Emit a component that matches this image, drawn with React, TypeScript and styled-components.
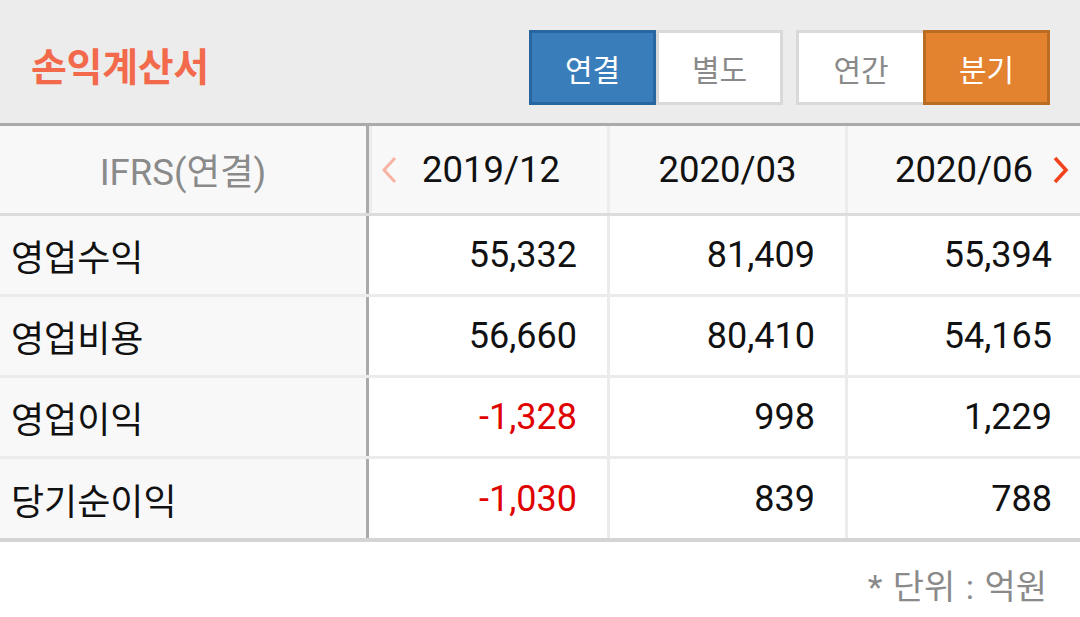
import React from "react";
import styled, { createGlobalStyle } from "styled-components";

const GlobalStyle = createGlobalStyle`
  html, body {
    margin: 0;
    padding: 0;
    background: #ffffff;
  }
  body {
    font-family: Roboto, "Noto Sans CJK KR", sans-serif;
    -webkit-font-smoothing: antialiased;
  }
  * { box-sizing: border-box; }
`;

const Page = styled.div`
  width: 1080px;
  height: 617px;
  display: flex;
  flex-direction: column;
  background: #ffffff;
  overflow: hidden;
`;

const TopBar = styled.header`
  height: 126px;
  flex: none;
  background: #ececec;
  border-bottom: 3px solid #aaaaaa;
  display: flex;
  align-items: flex-start;
  padding: 30px 30px 0 31px;
`;

const Title = styled.h1`
  margin: 0;
  height: 75px;
  padding-bottom: 8px;
  display: flex;
  align-items: center;
  font-family: "Noto Sans CJK KR", sans-serif;
  font-weight: 700;
  font-size: 39px;
  letter-spacing: -0.3px;
  color: #f26a4b;
  flex: 1;
`;

const Toggles = styled.div`
  display: flex;
  gap: 13px;
`;

const Group = styled.div`
  display: flex;
`;

const ToggleButton = styled.button<{ $tone: "blue" | "orange" | "off" }>`
  width: 127px;
  height: 75px;
  margin: 0;
  padding: 0;
  display: flex;
  align-items: center;
  justify-content: center;
  font-family: "Noto Sans CJK KR", sans-serif;
  font-size: 30px;
  font-weight: 400;
  border: 3px solid
    ${(p) =>
      p.$tone === "blue" ? "#2866a1" : p.$tone === "orange" ? "#b96d23" : "#d9d9d9"};
  background: ${(p) =>
    p.$tone === "blue" ? "#3a7dbb" : p.$tone === "orange" ? "#e3822f" : "#ffffff"};
  color: ${(p) => (p.$tone === "off" ? "#8a8a8a" : "#ffffff")};
  & + & {
    border-left-width: ${(p) => (p.$tone === "off" ? "0" : "3px")};
  }
`;

const Table = styled.div`
  flex: none;
  display: flex;
  flex-direction: column;
  border-bottom: 4px solid #d4d4d4;
`;

const Row = styled.div<{ $head?: boolean }>`
  display: grid;
  grid-template-columns: 369px 238px 238px 1fr;
  height: ${(p) => (p.$head ? "90px" : "81px")};
  border-bottom: 3px solid ${(p) => (p.$head ? "#dcdcdc" : "#ebebeb")};
  background: ${(p) => (p.$head ? "#f8f8f8" : "#ffffff")};
  &:last-child {
    border-bottom: none;
    height: 79px;
  }
`;

const LabelCell = styled.div<{ $head?: boolean }>`
  background: #f8f8f8;
  border-right: 3px solid #aaaaaa;
  display: flex;
  align-items: center;
  justify-content: ${(p) => (p.$head ? "center" : "flex-start")};
  padding-left: ${(p) => (p.$head ? "0" : "11px")};
  font-size: ${(p) => (p.$head ? "36.5px" : "36px")};
  color: ${(p) => (p.$head ? "#8a8a8a" : "#111111")};
`;

const PeriodCell = styled.div<{ $divider?: boolean }>`
  position: relative;
  display: flex;
  align-items: center;
  justify-content: center;
  border-left: 3px solid #ececec;
  font-size: 36.5px;
  color: #111111;
  padding-left: ${(p) => (p.$divider ? "0" : "3px")};
`;

const ValueCell = styled.div<{ $divider?: boolean; $negative?: boolean }>`
  display: flex;
  align-items: center;
  justify-content: flex-end;
  padding-right: 30px;
  border-left: ${(p) => (p.$divider ? "3px solid #ebebeb" : "none")};
  font-size: 36px;
  color: ${(p) => (p.$negative ? "#e00000" : "#111111")};
  &:last-child {
    padding-right: 28px;
  }
`;

const Chevron = styled.svg<{ $side: "left" | "right" }>`
  position: absolute;
  top: 50%;
  transform: translateY(-50%);
  ${(p) => (p.$side === "left" ? "left: 9px;" : "right: 11px;")}
  width: 16px;
  height: 28px;
`;

const Footer = styled.footer`
  flex: 1;
  display: flex;
  justify-content: flex-end;
  align-items: flex-start;
  padding: 18px 33px 0 0;
  font-family: Roboto, "Noto Sans CJK KR", sans-serif;
  font-size: 34px;
  word-spacing: 2px;
  color: #8a8a8a;
`;

type Line = { label: string; values: number[] };

const periods = ["2019/12", "2020/03", "2020/06"];

const lines: Line[] = [
  { label: "영업수익", values: [55332, 81409, 55394] },
  { label: "영업비용", values: [56660, 80410, 54165] },
  { label: "영업이익", values: [-1328, 998, 1229] },
  { label: "당기순이익", values: [-1030, 839, 788] },
];

const fmt = (n: number) => n.toLocaleString("en-US");

export default function App() {
  return (
    <Page>
      <GlobalStyle />
      <TopBar>
        <Title>손익계산서</Title>
        <Toggles>
          <Group>
            <ToggleButton $tone="blue">연결</ToggleButton>
            <ToggleButton $tone="off">별도</ToggleButton>
          </Group>
          <Group>
            <ToggleButton $tone="off" style={{ borderRightWidth: 0 }}>
              연간
            </ToggleButton>
            <ToggleButton $tone="orange">분기</ToggleButton>
          </Group>
        </Toggles>
      </TopBar>
      <Table>
        <Row $head>
          <LabelCell $head>IFRS(연결)</LabelCell>
          {periods.map((p, i) => (
            <PeriodCell key={p} $divider={i > 0}>
              {i === 0 && (
                <Chevron $side="left" viewBox="0 0 16 28">
                  <polyline
                    points="14,2 3,14 14,26"
                    fill="none"
                    stroke="#f8b3a3"
                    strokeWidth="3"
                  />
                </Chevron>
              )}
              {p}
              {i === periods.length - 1 && (
                <Chevron $side="right" viewBox="0 0 16 28">
                  <polyline
                    points="2,2 13,14 2,26"
                    fill="none"
                    stroke="#f3431d"
                    strokeWidth="3.6"
                  />
                </Chevron>
              )}
            </PeriodCell>
          ))}
        </Row>
        {lines.map((l) => (
          <Row key={l.label}>
            <LabelCell>{l.label}</LabelCell>
            {l.values.map((v, i) => (
              <ValueCell key={i} $divider={i > 0} $negative={v < 0}>
                {fmt(v)}
              </ValueCell>
            ))}
          </Row>
        ))}
      </Table>
      <Footer>* 단위 : 억원</Footer>
    </Page>
  );
}
